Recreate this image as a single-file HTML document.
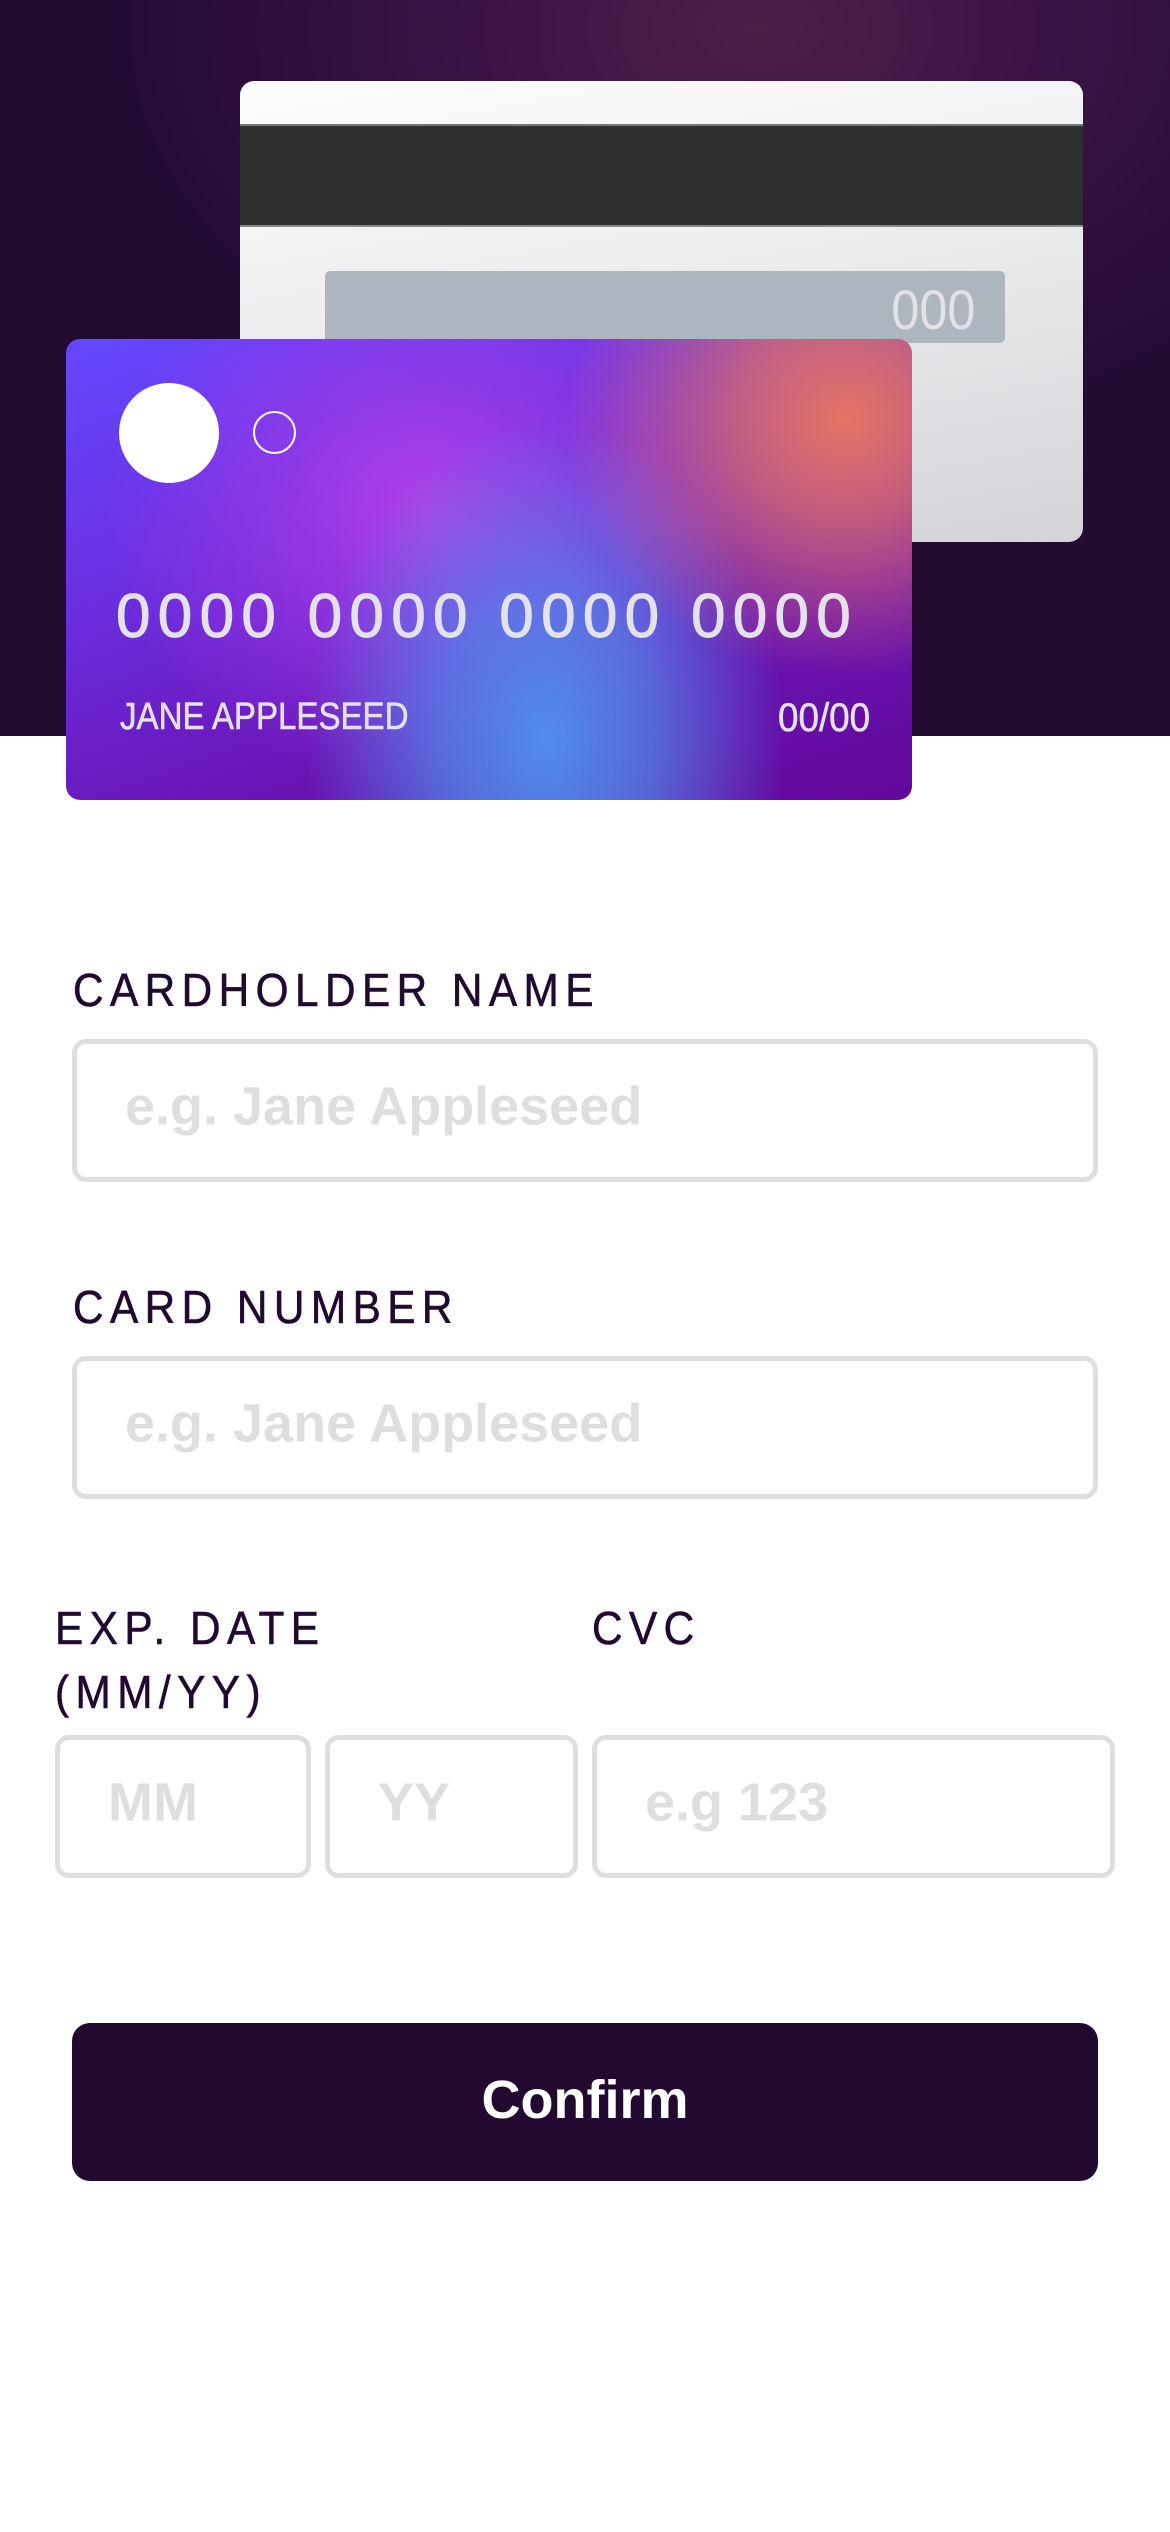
<!DOCTYPE html>
<html><head><meta charset="utf-8">
<style>
*{margin:0;padding:0;box-sizing:border-box}
html,body{width:1170px;height:2532px;background:#fff;overflow:hidden;font-family:"Liberation Sans",sans-serif}
.hdr{position:absolute;left:0;top:0;width:1170px;height:736px;
background:radial-gradient(ellipse 650px 420px at 760px 30px,#4c1f47 0%,#3a1444 45%,rgba(34,12,50,0) 100%),#220c32;}
.back{position:absolute;left:240px;top:81px;width:843px;height:461px;border-radius:14px;overflow:hidden;
background:linear-gradient(170deg,#fdfdfd 0%,#ececee 45%,#d3d3d8 100%)}
.stripe{position:absolute;left:0;top:43px;width:100%;height:103px;background:#2f2f2f;border-top:2px solid #777;border-bottom:2px solid #888}
.cvcbox{position:absolute;left:85px;top:190px;width:680px;height:72px;background:#adb5be;border-radius:5px}
.cvcbox span{position:absolute;right:30px;top:6px;font-size:56px;color:#e2e2e6;display:inline-block;transform:scaleX(.9);transform-origin:right}
.front{position:absolute;left:66px;top:339px;width:846px;height:461px;border-radius:14px;overflow:hidden;
background:
radial-gradient(ellipse 280px 260px at 780px 80px,rgba(228,116,100,1) 0%,rgba(228,116,100,.7) 40%,rgba(228,116,100,0) 100%),
radial-gradient(ellipse 240px 320px at 480px 400px,rgba(80,140,235,1) 0%,rgba(80,140,235,.7) 45%,rgba(80,140,235,0) 100%),
radial-gradient(ellipse 320px 280px at 360px 170px,rgba(180,64,232,.95) 0%,rgba(170,60,230,.5) 50%,rgba(170,60,230,0) 100%),
linear-gradient(160deg,#6448fe 0%,#6a2fe0 35%,#6b16b8 65%,#62089a 100%)}
.c1{position:absolute;left:53px;top:44px;width:100px;height:100px;border-radius:50%;background:#fff}
.c2{position:absolute;left:187px;top:72px;width:43px;height:43px;border-radius:50%;border:2px solid #fff}
.num{position:absolute;left:50px;top:242px;font-size:62px;color:#e3e2ea;letter-spacing:7.3px;white-space:nowrap;-webkit-text-stroke:1px #e3e2ea}
.name{position:absolute;left:54px;top:357px;font-size:38px;color:#e3e2ea;white-space:nowrap;display:inline-block;transform:scaleX(.87);transform-origin:left;-webkit-text-stroke:0.6px #e3e2ea}
.date{position:absolute;right:42px;top:357px;font-size:40px;color:#e3e2ea;white-space:nowrap;display:inline-block;transform:scaleX(.92);transform-origin:right;-webkit-text-stroke:0.6px #e3e2ea}
.lbl{position:absolute;font-size:46px;color:#21092f;letter-spacing:7px;white-space:nowrap;display:inline-block;transform:scaleX(.92);transform-origin:left;line-height:64px;-webkit-text-stroke:0.6px #21092f}
.inp{position:absolute;border:5px solid #dedede;border-radius:14px;background:#fff}
.inp span{position:absolute;left:48px;top:50%;transform:translateY(-57%);font-size:54px;font-weight:bold;color:#dedede;white-space:nowrap}
.btn{position:absolute;left:72px;top:2023px;width:1026px;height:158px;background:#220930;border-radius:18px;color:#fff;font-weight:bold;font-size:54px;text-align:center;line-height:154px}
</style></head><body>
<div class="hdr"></div>
<div class="back"><div class="stripe"></div><div class="cvcbox"><span>000</span></div></div>
<div class="front">
<div class="c1"></div><div class="c2"></div>
<div class="num">0000 0000 0000 0000</div>
<div class="name">JANE APPLESEED</div>
<div class="date">00/00</div>
</div>

<div class="lbl" style="left:73px;top:958px">CARDHOLDER NAME</div>
<div class="inp" style="left:72px;top:1039px;width:1026px;height:143px"><span>e.g. Jane Appleseed</span></div>

<div class="lbl" style="left:73px;top:1275px">CARD NUMBER</div>
<div class="inp" style="left:72px;top:1356px;width:1026px;height:143px"><span>e.g. Jane Appleseed</span></div>

<div class="lbl" style="left:55px;top:1596px">EXP. DATE<br>(MM/YY)</div>
<div class="lbl" style="left:592px;top:1596px">CVC</div>
<div class="inp" style="left:55px;top:1735px;width:256px;height:143px"><span>MM</span></div>
<div class="inp" style="left:325px;top:1735px;width:253px;height:143px"><span>YY</span></div>
<div class="inp" style="left:592px;top:1735px;width:523px;height:143px"><span>e.g 123</span></div>

<div class="btn">Confirm</div>
</body></html>
